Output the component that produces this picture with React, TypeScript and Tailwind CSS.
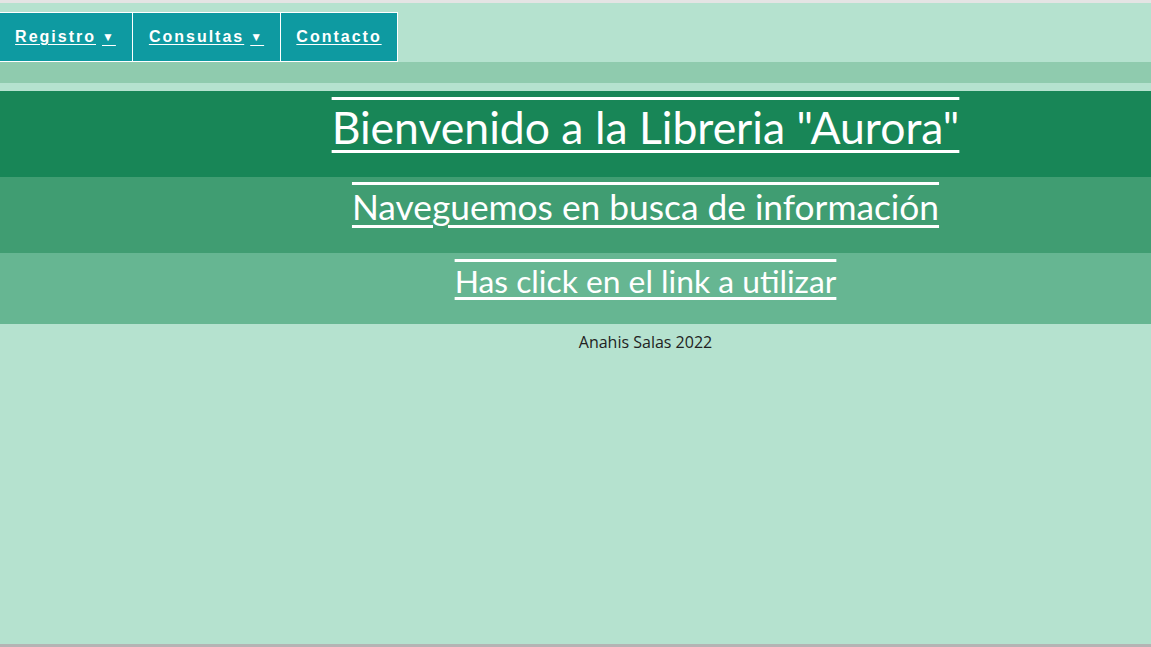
export default function App() {
  const navItems = [
    { label: "Registro", arrow: true, w: "w-[135px]" },
    { label: "Consultas", arrow: true, w: "w-[149px]" },
    { label: "Contacto", arrow: false, w: "w-[118px]" },
  ];

  return (
    <div className="min-h-[647px] w-full bg-[#b5e2cf] flex flex-col">
      {/* top edge */}
      <div className="h-[3px] bg-[#e4e4e4]" />

      {/* menu */}
      <nav className="mt-[9px] flex -ml-[2px]">
        {navItems.map((item) => (
          <a
            key={item.label}
            href="#"
            className={`${item.w} h-[50px] -ml-px first:ml-0 border border-white bg-[#0e9aa1] flex items-center justify-center text-white font-bold text-[16px] tracking-[2px] [font-family:'Liberation_Sans',Arial,sans-serif]`}
          >
            <span className="underline decoration-1 underline-offset-2">{item.label}</span>
            {item.arrow && (
              <span className="ml-[6px] text-[12px] underline decoration-1 underline-offset-[4px]">▼</span>
            )}
          </a>
        ))}
      </nav>

      <div className="h-[21px] bg-[#8fcbae]" />
      <div className="h-[8px]" />

      <header className="[font-family:Lato,'Open_Sans',sans-serif] text-white font-normal">
        <div className="h-[86px] bg-[#188657] pl-[140px] flex justify-center pt-[10px]">
          <h1 className="text-[44.5px] leading-[52px] [text-decoration-line:underline_overline] decoration-[3px] underline-offset-[6px]">
            Bienvenido a la Libreria "Aurora"
          </h1>
        </div>
        <div className="h-[76px] bg-[#409d72] pl-[140px] flex justify-center pt-[9px]">
          <h2 className="text-[35.3px] leading-[42px] [text-decoration-line:underline_overline] decoration-[3px] underline-offset-[5px]">
            Naveguemos en busca de información
          </h2>
        </div>
        <div className="h-[71px] bg-[#66b692] pl-[140px] flex justify-center pt-[9px]">
          <h3 className="text-[31.8px] leading-[38px] [text-decoration-line:underline_overline] decoration-[3px] underline-offset-[4px]">
            Has click en el link a utilizar
          </h3>
        </div>
      </header>

      <footer className="pl-[140px] pt-[6px] text-center text-[16px] text-[#222] [font-family:'Open_Sans',Lato,sans-serif]">
        Anahis Salas 2022
      </footer>

      <div className="flex-1" />
      <div className="h-[3px] bg-[#b4b4b4]" />
    </div>
  );
}
